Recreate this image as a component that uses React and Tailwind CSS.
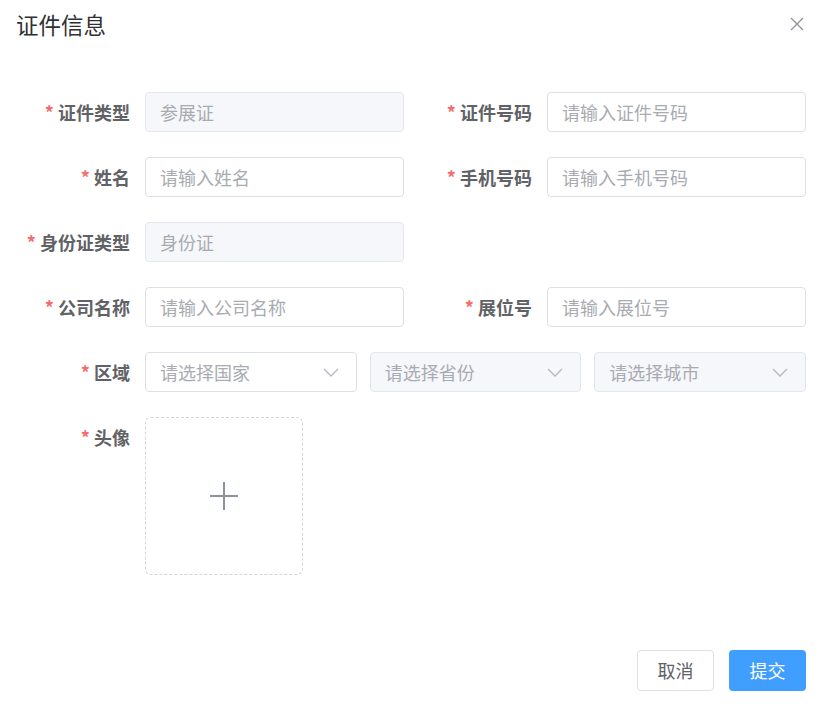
import React from "react";

const font = { fontFamily: '"Noto Sans CJK SC", "Noto Sans", sans-serif' };

function Label({ children, top }) {
  return (
    <div
      className={`w-[129px] shrink-0 pr-[15px] flex justify-end text-[18px] font-bold text-[#606266] h-[40px] items-center ${top ? "self-start" : ""}`}
    >
      <span className="text-[#f56c6c] mr-[4px] font-bold">*</span>
      <span>{children}</span>
    </div>
  );
}

function Input({ placeholder, disabled }) {
  return (
    <div
      className={`flex-1 h-[40px] rounded-[4px] border flex items-center pl-[14px] text-[18px] ${
        disabled
          ? "bg-[#f5f7fa] border-[#e4e7ed] text-[#a8abb2]"
          : "bg-white border-[#dcdfe6] text-[#a8abb2]"
      }`}
    >
      {placeholder}
    </div>
  );
}

function Chevron() {
  return (
    <svg width="16" height="9" viewBox="0 0 16 9" fill="none">
      <path d="M1 1 L8 8 L15 1" stroke="#b4b8bf" strokeWidth="1.3" />
    </svg>
  );
}

function Select({ placeholder, disabled }) {
  return (
    <div
      className={`h-[40px] rounded-[4px] border flex items-center justify-between pl-[14px] pr-[17px] text-[18px] text-[#a8abb2] ${
        disabled ? "bg-[#f5f7fa] border-[#e4e7ed]" : "bg-white border-[#dcdfe6]"
      }`}
    >
      <span>{placeholder}</span>
      <Chevron />
    </div>
  );
}

function Field({ label, children }) {
  return (
    <div className="flex items-center">
      <Label>{label}</Label>
      {children}
    </div>
  );
}

export default function App() {
  return (
    <div className="w-[820px] h-[710px] bg-white flex flex-col" style={font}>
      <div className="h-[48px] flex items-center justify-between pl-[16px] pr-[16px]">
        <div className="text-[22.5px] text-[#303133] leading-none">证件信息</div>
        <svg width="14" height="14" viewBox="0 0 14 14">
          <path d="M1 1 L13 13 M13 1 L1 13" stroke="#909399" strokeWidth="1.3" />
        </svg>
      </div>

      <div className="pt-[44px] pl-[16px] pr-[14px] flex flex-col gap-[25px]">
        <div className="grid grid-cols-2 gap-x-[14px]">
          <Field label="证件类型">
            <Input placeholder="参展证" disabled />
          </Field>
          <Field label="证件号码">
            <Input placeholder="请输入证件号码" />
          </Field>
        </div>
        <div className="grid grid-cols-2 gap-x-[14px]">
          <Field label="姓名">
            <Input placeholder="请输入姓名" />
          </Field>
          <Field label="手机号码">
            <Input placeholder="请输入手机号码" />
          </Field>
        </div>
        <div className="grid grid-cols-2 gap-x-[14px]">
          <Field label="身份证类型">
            <Input placeholder="身份证" disabled />
          </Field>
          <div />
        </div>
        <div className="grid grid-cols-2 gap-x-[14px]">
          <Field label="公司名称">
            <Input placeholder="请输入公司名称" />
          </Field>
          <Field label="展位号">
            <Input placeholder="请输入展位号" />
          </Field>
        </div>
        <div className="flex items-center">
          <Label>区域</Label>
          <div className="flex-1 grid grid-cols-3 gap-[13px]">
            <Select placeholder="请选择国家" />
            <Select placeholder="请选择省份" disabled />
            <Select placeholder="请选择城市" disabled />
          </div>
        </div>
        <div className="flex">
          <Label top>头像</Label>
          <div className="w-[158px] h-[158px] rounded-[6px] border border-dashed border-[#d3d5da] flex items-center justify-center">
            <svg width="30" height="30" viewBox="0 0 30 30">
              <path d="M15 1 V29 M1 15 H29" stroke="#8c939d" strokeWidth="2" />
            </svg>
          </div>
        </div>
      </div>

      <div className="mt-auto pb-[19px] pr-[14px] flex justify-end gap-[15px]">
        <button className="w-[77px] h-[41px] rounded-[4px] border border-[#dcdfe6] bg-white text-[18px] text-[#606266]">
          取消
        </button>
        <button className="w-[77px] h-[41px] rounded-[4px] bg-[#409eff] text-[18px] text-white">
          提交
        </button>
      </div>
    </div>
  );
}
